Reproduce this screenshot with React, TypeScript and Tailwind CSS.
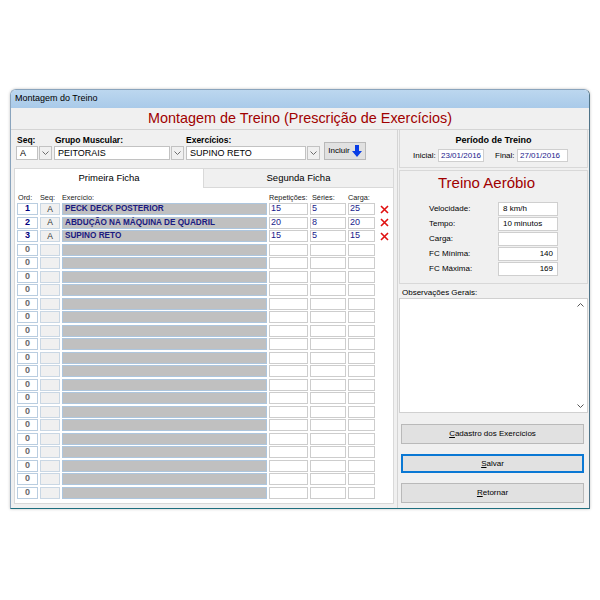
import React from 'react';

type Row = { ord: string; seq: string; ex: string; rep: string; ser: string; carga: string };

const filled: Row[] = [
  { ord: '1', seq: 'A', ex: 'PECK DECK POSTERIOR', rep: '15', ser: '5', carga: '25' },
  { ord: '2', seq: 'A', ex: 'ABDUÇÃO NA MÁQUINA DE QUADRIL', rep: '20', ser: '8', carga: '20' },
  { ord: '3', seq: 'A', ex: 'SUPINO RETO', rep: '15', ser: '5', carga: '15' },
];

const rows: Row[] = [
  ...filled,
  ...Array.from({ length: 19 }, () => ({ ord: '0', seq: '', ex: '', rep: '', ser: '', carga: '' })),
];

const Chevron = () => (
  <svg width="7" height="4" viewBox="0 0 7 4">
    <path d="M0.5 0.5 L3.5 3.5 L6.5 0.5" fill="none" stroke="#6d6d6d" strokeWidth="1" />
  </svg>
);

const Combo = ({ w, text }: { w: string; text: string }) => (
  <div className={`${w} h-[14px] flex gap-[1px]`}>
    <div className="flex-1 border border-[#c2c2c2] bg-white pl-[3px] text-[9px] leading-[12px] text-black">{text}</div>
    <div className="w-[13px] border border-[#c2c2c2] bg-[#f0f0f0] flex items-center justify-center">
      <Chevron />
    </div>
  </div>
);

const Field = ({ w, text, right }: { w: string; text: string; right?: boolean }) => (
  <div
    className={`${w} h-[14px] border border-[#cfcfcf] bg-white text-[8px] leading-[12px] text-black px-[4px] ${
      right ? 'text-right' : ''
    }`}
  >
    {text}
  </div>
);

const WinButton = ({ first, rest, focused }: { first: string; rest: string; focused?: boolean }) => (
  <div
    className={`ml-[2px] w-[183px] flex items-center justify-center bg-[#e1e1e1] text-[8px] text-black ${
      focused ? 'h-[19px] border-2 border-[#0a78d4]' : 'h-[20px] border border-[#b9b9b9]'
    }`}
  >
    <span className="underline">{first}</span>
    {rest}
  </div>
);

export default function App() {
  return (
    <div className="w-[600px] h-[600px] bg-white font-['Liberation_Sans',Arial,sans-serif] pt-[89px] pl-[10px]">
      <div className="w-[580px] h-[420px] flex flex-col border border-[#8aa4bd] border-b-[#1e6e7e] border-r-[#4f7387] rounded-t-[6px] overflow-hidden shadow-[0_0_3px_rgba(0,0,0,0.25)]">
        {/* title bar */}
        <div className="h-[18px] bg-linear-to-b from-[#bcd7ef] to-[#a9cae9] flex items-center pl-[4px] text-[9px] text-black">
          Montagem do Treino
        </div>

        <div className="flex-1 bg-[#f0f0f0] flex flex-col">
          <div className="h-[22px] border-b border-[#d4d4d4] flex items-center justify-center text-[14.4px] text-[#a00000]">
            Montagem de Treino (Prescrição de Exercícios)
          </div>

          <div className="flex flex-1">
            {/* left side */}
            <div className="w-[386px] pl-[3px] flex flex-col">
              <div className="ml-[2px] mt-[5px] flex items-end">
                <div className="w-[36px] flex flex-col">
                  <span className="pl-[1px] h-[11px] text-[8.5px] leading-[10px] font-bold text-black">Seq:</span>
                  <Combo w="w-[36px]" text="A" />
                </div>
                <div className="ml-[2px] w-[130px] flex flex-col">
                  <span className="pl-[1px] h-[11px] text-[8.5px] leading-[10px] font-bold text-black">Grupo Muscular:</span>
                  <Combo w="w-[130px]" text="PEITORAIS" />
                </div>
                <div className="ml-[2px] w-[134px] flex flex-col">
                  <span className="h-[11px] text-[8.5px] leading-[10px] font-bold text-black">Exercícios:</span>
                  <Combo w="w-[134px]" text="SUPINO RETO" />
                </div>
                <div className="ml-[4px] w-[42px] h-[18px] bg-[#e1e1e1] border border-[#b9b9b9] flex items-center justify-center gap-[2px] text-[8px] text-black">
                  Incluir
                  <svg width="10" height="12" viewBox="0 0 10 12">
                    <path d="M3 0h4v6h3l-5 6-5-6h3z" fill="#0a3ee6" />
                  </svg>
                </div>
              </div>

              {/* tabs */}
              <div className="mt-[8px] w-[380px] flex h-[20px]">
                <div className="w-[190px] bg-white border-t border-l border-r border-[#d9d9d9] flex items-center justify-center text-[9.5px] text-black">
                  Primeira Ficha
                </div>
                <div className="flex-1 bg-[#f0f0f0] border-t border-r border-b border-[#d9d9d9] flex items-center justify-center text-[9.5px] text-black">
                  Segunda Ficha
                </div>
              </div>
              <div className="w-[380px] h-[316px] bg-white border border-t-0 border-[#d9d9d9] pl-[2px] pt-[5px]">
                <div className="grid grid-cols-[21px_20px_205px_39px_36px_27px_14px] gap-x-[2px] h-[9px] text-[7.3px] leading-[9px] text-[#222]">
                  <span className="pl-[1px]">Ord:</span>
                  <span>Seq:</span>
                  <span>Exercício:</span>
                  <span>Repetições:</span>
                  <span className="pl-[2px]">Séries:</span>
                  <span>Carga:</span>
                  <span />
                </div>
                <div className="mt-[1px] grid grid-cols-[21px_20px_205px_39px_36px_27px_14px] gap-x-[2px] gap-y-[1.5px] auto-rows-[12px]">
                  {rows.map((r, i) => (
                    <React.Fragment key={i}>
                      <div
                        className={`border border-[#b9cde0] bg-white flex items-center justify-center text-[9px] font-bold ${
                          r.seq ? 'text-[#00007f]' : 'text-[#6a6a6a]'
                        }`}
                      >
                        {r.ord}
                      </div>
                      <div className="border border-[#c9d7e4] bg-[#f0f0f0] flex items-center justify-center text-[8.5px] text-[#333]">
                        {r.seq}
                      </div>
                      <div className="border border-[#adc6de] bg-[#c0c0c0] pl-[2px] text-[8.2px] leading-[10.5px] font-bold text-[#1a1a80] whitespace-nowrap">
                        {r.ex}
                      </div>
                      <div className="border-[1.5px] border-[#cdcdcd] bg-white pl-[1px] text-[9px] leading-[9px] text-[#1a1a8c]">{r.rep}</div>
                      <div className="border-[1.5px] border-[#cdcdcd] bg-white pl-[1px] text-[9px] leading-[9px] text-[#1a1a8c]">{r.ser}</div>
                      <div className="border-[1.5px] border-[#cdcdcd] bg-white pl-[1px] text-[9px] leading-[9px] text-[#1a1a8c]">{r.carga}</div>
                      <div className="flex items-center justify-center">
                        {r.seq && (
                          <svg width="9" height="9" viewBox="0 0 9 9">
                            <path d="M1 1L8 8M8 1L1 8" stroke="#e01010" strokeWidth="1.6" />
                          </svg>
                        )}
                      </div>
                    </React.Fragment>
                  ))}
                </div>
              </div>
            </div>

            {/* right side */}
            <div className="flex-1 border-l border-[#d4d4d4] pl-[1px] pr-[1px] flex flex-col">
              <div className="w-[189px] h-[38px] border border-[#d8d8d8] border-t-0 flex flex-col">
                <div className="pt-[5px] h-[16px] text-center text-[9px] leading-[10px] font-bold text-black">
                  Período de Treino
                </div>
                <div className="mt-[3px] flex items-center pl-[13px] text-[8px] text-black">
                  <span className="w-[23px]">Inicial:</span>
                  <div className="ml-[2px] w-[46px] h-[13px] border border-[#cfcfcf] bg-white pl-[2px] text-[8px] leading-[11px] text-[#1a1a8c]">
                    23/01/2016
                  </div>
                  <span className="ml-[11px] w-[20px]">Final:</span>
                  <div className="ml-[2px] w-[51px] h-[13px] border border-[#cfcfcf] bg-white pl-[2px] text-[8px] leading-[11px] text-[#1a1a8c]">
                    27/01/2016
                  </div>
                </div>
              </div>

              <div className="mt-[2px] w-[189px] h-[114px] border border-[#d8d8d8] flex flex-col">
                <div className="pt-[3px] pr-[14px] h-[22px] text-center text-[15px] leading-[18px] text-[#a00000]">
                  Treino Aeróbio
                </div>
                <div className="mt-[9px] flex flex-col gap-[1px]">
                  {[
                    ['Velocidade:', '8 km/h', false],
                    ['Tempo:', '10 minutos', false],
                    ['Carga:', '', false],
                    ['FC Mínima:', '140', true],
                    ['FC Máxima:', '169', true],
                  ].map(([l, v, r]) => (
                    <div key={l as string} className="flex items-center pl-[29px]">
                      <span className="w-[69px] text-[8px] text-black">{l as string}</span>
                      <Field w="w-[60px]" text={v as string} right={r as boolean} />
                    </div>
                  ))}
                </div>
              </div>

              <div className="mt-[4px] h-[10px] pl-[3px] text-[8px] leading-[10px] text-black">Observações Gerais:</div>
              <div className="w-[189px] h-[115px] bg-white border border-[#d0d0d0] flex justify-end">
                <div className="w-[14px] flex flex-col items-center justify-between py-[4px] text-[#555]">
                  <svg width="7" height="4" viewBox="0 0 7 4">
                    <path d="M0.5 3.5 L3.5 0.5 L6.5 3.5" fill="none" stroke="#555" strokeWidth="1" />
                  </svg>
                  <svg width="7" height="4" viewBox="0 0 7 4">
                    <path d="M0.5 0.5 L3.5 3.5 L6.5 0.5" fill="none" stroke="#555" strokeWidth="1" />
                  </svg>
                </div>
              </div>

              <div className="mt-[11px]">
                <WinButton first="C" rest="adastro dos Exercícios" />
              </div>
              <div className="mt-[10px]">
                <WinButton first="S" rest="alvar" focused />
              </div>
              <div className="mt-[10px]">
                <WinButton first="R" rest="etornar" />
              </div>
            </div>
          </div>
        </div>
      </div>
    </div>
  );
}
